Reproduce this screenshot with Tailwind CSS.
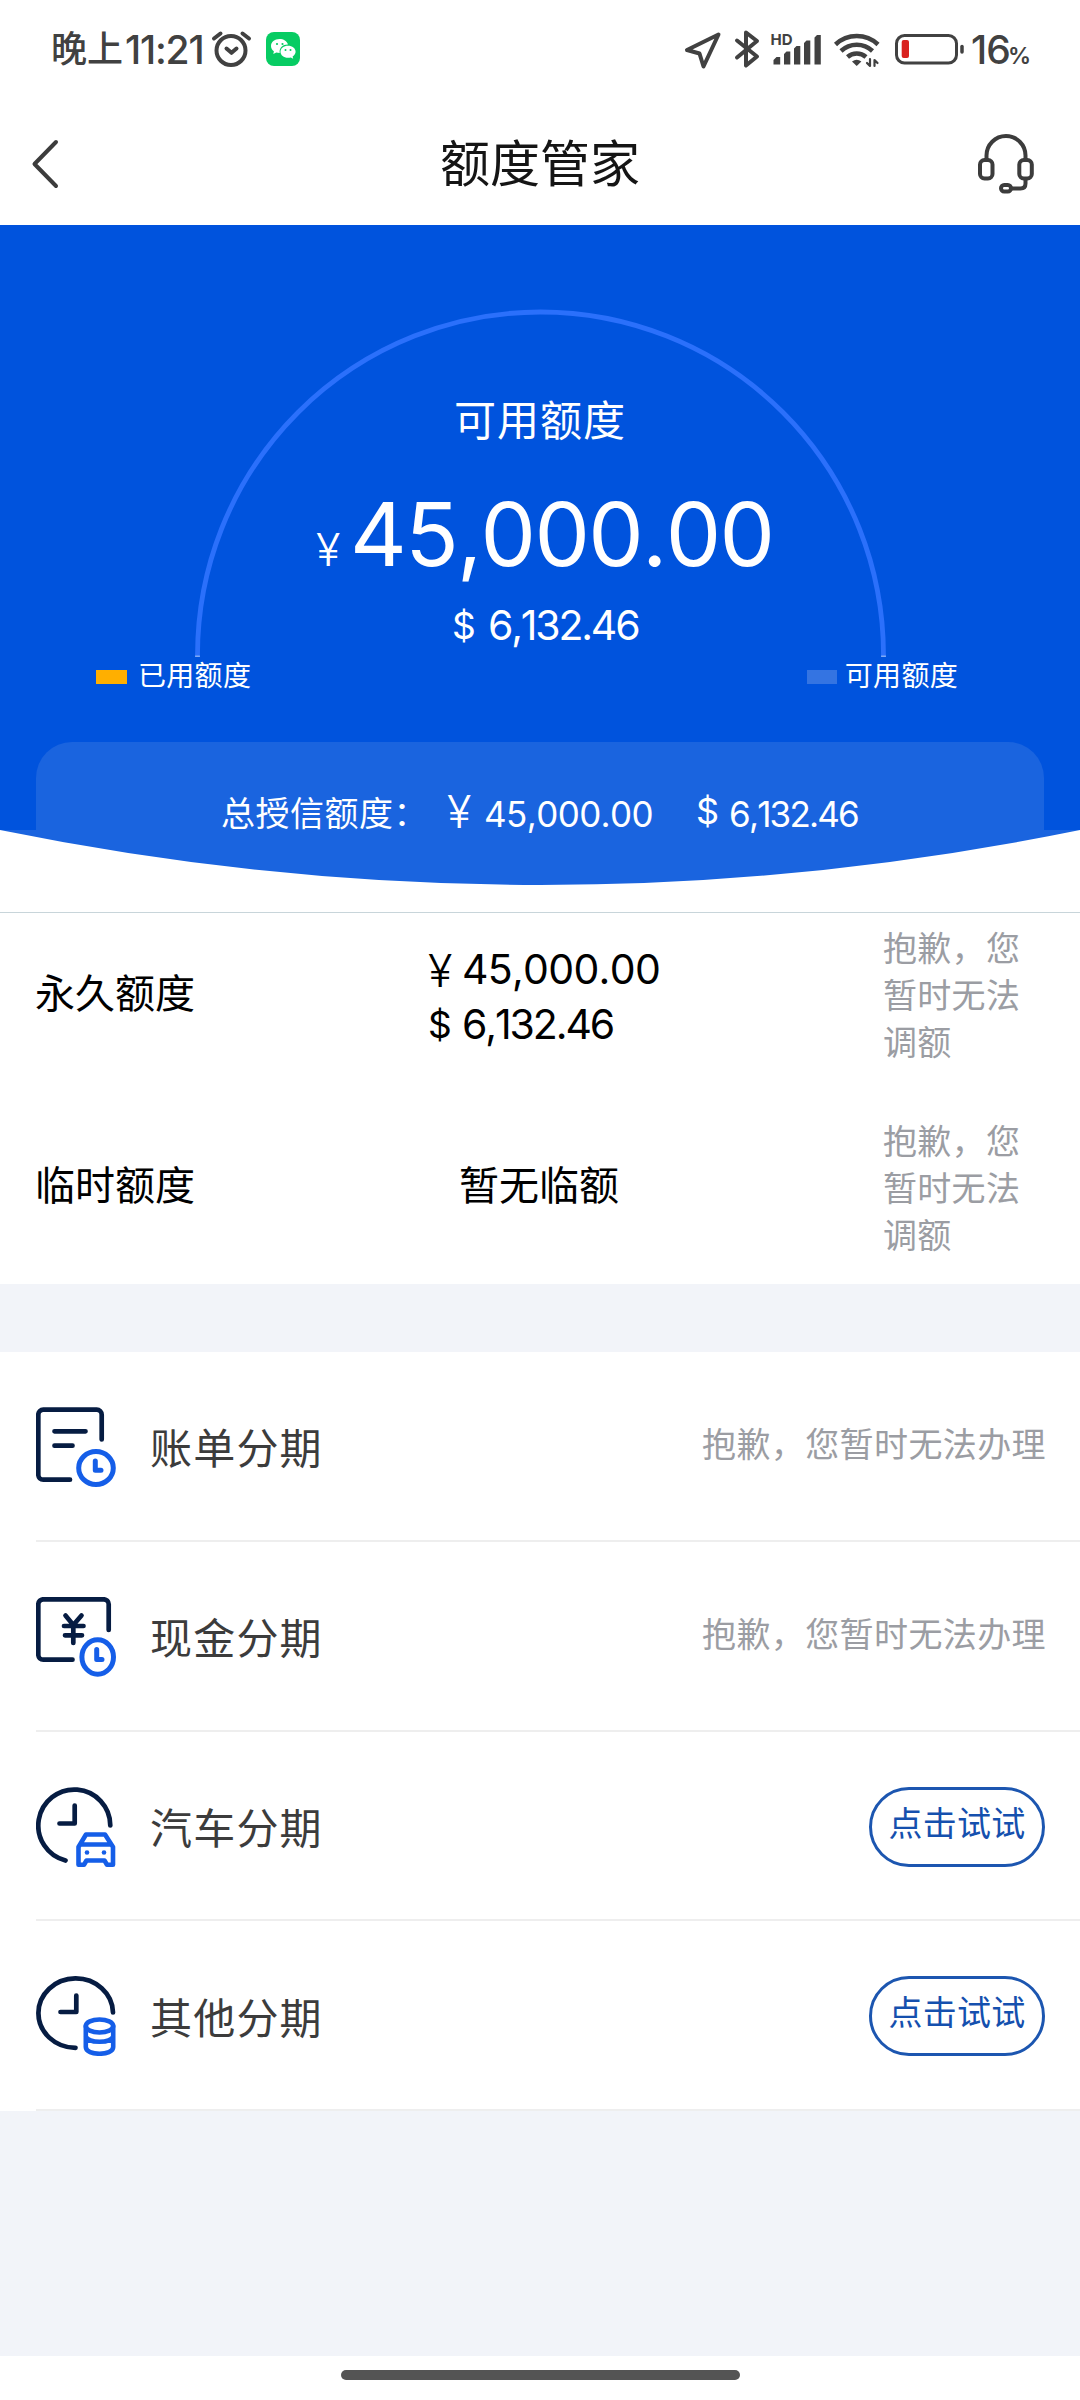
<!DOCTYPE html>
<html lang="zh-CN">
<head>
<meta charset="utf-8">
<title>额度管家</title>
<script src="https://cdn.jsdelivr.net/npm/@tailwindcss/browser@4"></script>
</head>
<body class="bg-white">
<div class="flex h-[2400px] w-[1080px] flex-col overflow-hidden bg-white font-[Inter,'Noto_Sans_CJK_SC',sans-serif] leading-none whitespace-nowrap text-black [font-kerning:none]">

  <!-- status bar -->
  <header class="flex h-[98px] shrink-0 items-center pl-[51px] text-[#414141]">
    <span class="text-[36px] font-medium">晚上</span>
    <span class="ml-[2px] w-[85px] text-[39px] font-medium tracking-[-1.2px]">11:21</span>
    <svg class="shrink-0" width="42" height="42" viewBox="210 28 42 42" fill="none" stroke="currentColor" stroke-width="4" stroke-linecap="round" stroke-linejoin="round">
      <circle cx="231" cy="50.5" r="14.5"/><path d="M214 38.5 220.5 33.5M242.5 33.5 249 38.5M226.5 48.5 231.5 52.8 236.5 48.5"/>
    </svg>
    <svg class="ml-[14px] shrink-0" width="34" height="34" viewBox="0 0 34 34">
      <rect width="34" height="34" rx="8" fill="#07cc63"/>
      <path fill="#fff" d="M13.500 7C8.500 7 5 10 5 14c0 2.300 1.100 4 2.900 5.300L7.300 22l3-1.500 3.400.5C13 15.500 17 12.300 22 12.500 21 9 17.500 7 13.500 7z"/>
      <path fill="#fff" d="M22 13.800c-4.300 0-7.500 2.600-7.500 6s3.200 6 7.500 6c1 0 2-.2 2.800-.4l2.400 1.300-.6-2.300c1.900-1.100 3-2.700 3-4.600 0-3.400-3.300-6-7.600-6z"/>
      <g fill="#07cc63"><circle cx="11" cy="12" r="1.100"/><circle cx="16.500" cy="12" r="1.100"/><circle cx="19.500" cy="18" r="1"/><circle cx="24.500" cy="18" r="1"/></g>
    </svg>
    <svg class="ml-[382px] shrink-0" width="284" height="46" viewBox="682 26 284 46" fill="none" stroke="currentColor" stroke-width="4" stroke-linecap="round" stroke-linejoin="round">
      <path d="M718.500 34.500 687 50 699.500 53.500 703.500 66.500z"/>
      <path d="M737 40.500 757 56.500 746 65.500V32.500L757 41 737 57.500"/>
      <text x="770.500" y="45" class="text-[15px] font-bold" fill="currentColor" stroke="none">HD</text>
      <g fill="currentColor" stroke="none"><path d="M773.500 64.500V60l3-3h3.700v7.500zM784 64.500V54l2.500-2.500h3.800v13zM794 64.500V48.500l2.500-2.500h3.800v18.500zM804 64.500V43l2.500-2.500h3.800v24zM814.500 64.500V37.500l2.500-2.500h3.800v29.500z"/></g>
      <g stroke-width="4.500" stroke-linecap="butt"><path d="M835.500 44.500a31 31 0 0 1 42.500 0M841 51a23 23 0 0 1 31.500 0M847.500 57a14 14 0 0 1 18.500 0"/></g>
      <path fill="currentColor" stroke="none" d="M852 61.500q4.700-3.500 9.400 0L856.700 66z"/>
      <path stroke-width="2.200" d="M870 59v7l-3-3M874.500 66v-6l3 3"/>
      <rect x="896.500" y="35.500" width="60" height="27.500" rx="8" stroke-width="3"/>
      <path stroke-width="3.500" d="M962 46.500v5.500"/>
      <rect x="901.700" y="40" width="7.300" height="18" rx="2" fill="#d9211e" stroke="none"/>
    </svg>
    <div class="ml-[5px] flex items-baseline"><span class="w-[37px] text-[39px] font-medium tracking-[-1px]">16</span><span class="text-[23px] font-semibold">%</span></div>
  </header>

  <!-- title bar -->
  <nav class="flex h-[127px] shrink-0 items-center justify-between pr-[46px] pb-0 pl-[31px]">
    <svg class="mt-[4px]" width="70" height="52" viewBox="0 0 70 52" fill="none" stroke="#3c3c3c" stroke-width="4" stroke-linecap="round" stroke-linejoin="round"><path d="M25 4 3.500 26 25 48"/></svg>
    <h1 class="mt-[4px] ml-[7px] text-[50px] text-[#151515]">额度管家</h1>
    <svg class="mt-[5px] ml-[6px]" width="56" height="60" viewBox="0 0 56 60" fill="none" stroke="#3c3c3c" stroke-width="4" stroke-linecap="round">
      <path d="M8.500 25V21.500a19.500 19.500 0 0 1 39 0V25"/>
      <rect x="2" y="26" width="12.500" height="18.500" rx="4.500"/><rect x="41.300" y="26" width="12.500" height="18.500" rx="4.500"/>
      <path d="M47.500 45v4.500q0 5-5 5H34"/><rect x="23" y="51" width="10" height="6.500" rx="3.200"/>
    </svg>
  </nav>

  <!-- available credit -->
  <section class="relative flex h-[605px] shrink-0 flex-col bg-[#0053dd] text-white">
    <svg class="absolute top-[84px] left-[194px]" width="693" height="348" viewBox="0 0 693 348" fill="none" stroke="#2b70fb" stroke-width="4.800">
      <path d="M3.500 348V346a343 343 0 0 1 686 0V348"/><path stroke="#7fa9f5" d="M3.500 346.500v1.500M689.500 346.500v1.500"/>
    </svg>
    <div class="mt-[171px] flex h-[50px] items-center justify-center text-[42px] tracking-[1px]">可用额度</div>
    <div class="mt-[48px] flex h-[80px] items-center pl-[316px]">
      <div class="flex items-baseline"><span class="w-[34px] text-[45px] font-light">¥</span><span class="text-[88px] tracking-[-1.7px]">45,000.00</span></div>
    </div>
    <div class="mt-[31px] flex h-[40px] items-center pl-[452px] text-[41px]"><span class="w-[36px] text-[37px]">$</span><span class="tracking-[-2.2px]">6,132.46</span></div>
    <div class="mt-[16px] flex h-[30px] items-center justify-between pr-[122px] pl-[96px] text-[28px]">
      <div class="flex items-center tracking-[0.3px]"><i class="mt-[2px] mr-[11px] h-[14px] w-[31px] bg-[#ffaf00]"></i>已用额度</div>
      <div class="flex items-center tracking-[0.3px]"><i class="mt-[2px] mr-[8px] h-[14px] w-[30px] bg-[#3474e2]"></i>可用额度</div>
    </div>
    <div class="mx-[36px] mt-[51px] flex h-[88px] items-center rounded-t-[36px] bg-[#1a64df] pt-[56px] pl-[185px]">
      <span class="w-[226px] text-[34px] tracking-[0.5px]">总授信额度：</span>
      <span class="-mt-[6px] w-[37px] text-[45px] font-light">¥</span>
      <span class="w-[212px] text-[35px] tracking-[-0.600px]">45,000.00</span>
      <span class="-mt-[6px] w-[33px] text-[36px]">$</span>
      <span class="text-[35px] tracking-[-1.800px]">6,132.46</span>
    </div>
  </section>
  <svg class="shrink-0" width="1080" height="82" viewBox="0 0 1080 82"><path fill="#1a64df" d="M0 0Q540 110 1080 0z"/></svg>

  <!-- credit lines -->
  <section class="h-[372px] shrink-0 border-t border-[#c8d5da]">
    <div class="flex h-[165px] items-center pl-[35px]">
      <span class="-mt-[3px] w-[393px] text-[40px]">永久额度</span>
      <div class="mt-[3px] flex w-[455px] flex-col gap-[14px] text-[41px]">
        <div class="flex"><span class="w-[34px] text-[45px] leading-[43px] font-light">¥</span><span class="tracking-[-0.700px]">45,000.00</span></div>
        <div class="-mt-[2px] flex"><span class="w-[34px] text-[37px] leading-[41px]">$</span><span class="tracking-[-2.100px]">6,132.46</span></div>
      </div>
      <p class="w-[150px] text-[34px] leading-[47px] tracking-[0.300px] text-[#9b9da3]">抱歉，您<br>暂时无法<br>调额</p>
    </div>
    <div class="mt-[27px] flex h-[165px] items-center pl-[35px]">
      <span class="-mt-[3px] w-[424px] text-[40px]">临时额度</span>
      <span class="-mt-[3px] w-[424px] text-[40px]">暂无临额</span>
      <p class="mt-[1px] w-[150px] text-[34px] leading-[47px] tracking-[0.300px] text-[#9b9da3]">抱歉，您<br>暂时无法<br>调额</p>
    </div>
  </section>
  <div class="h-[68px] shrink-0 bg-[#f2f4f9]"></div>

  <!-- instalment services -->
  <ul class="shrink-0 text-[42px] text-[#3c3c3c]">
    <li class="ml-[36px] flex h-[190px] items-center border-b-2 border-[#eee] pr-[34px]">
      <svg width="80" height="80" viewBox="0 0 80 80" class="mt-[2px]" fill="none" stroke="#061c42" stroke-width="4.700" stroke-linecap="round" stroke-linejoin="round">
        <path d="M34 72.700H7.300a5 5 0 0 1-5-5V7.700a5 5 0 0 1 5-5H60.700a5 5 0 0 1 5 5V32.500M18.500 24.300H49.500M18.500 38.700H36.500"/>
        <g stroke="#155ee8" stroke-width="5"><ellipse cx="60" cy="61" rx="17.300" ry="16.500"/><path d="M59.300 54v9.300H65"/></g>
      </svg>
      <span class="mt-[6px] ml-[34px] grow tracking-[1.200px]">账单分期</span>
      <span class="-mt-[3px] text-[34px] tracking-[0.400px] text-[#9b9da3]">抱歉，您暂时无法办理</span>
    </li>
    <li class="ml-[36px] flex h-[190px] items-center border-b-2 border-[#eee] pr-[34px]">
      <svg width="80" height="80" viewBox="0 0 80 80" class="mt-[2px]" fill="none" stroke="#061c42" stroke-width="4.700" stroke-linecap="round" stroke-linejoin="round">
        <path d="M36.500 62.700H7.300a5 5 0 0 1-5-5V7.300a5 5 0 0 1 5-5H67.700a5 5 0 0 1 5 5V33"/>
        <path d="M29.500 18.500 37.300 28 45.500 18.500M37.300 28V46M28 29H47.500M29 38.300H46"/>
        <g stroke="#155ee8" stroke-width="5"><ellipse cx="61.700" cy="60" rx="15.800" ry="17.200"/><path d="M60.700 52.500V62.500H66"/></g>
      </svg>
      <span class="mt-[6px] ml-[34px] grow tracking-[1.200px]">现金分期</span>
      <span class="-mt-[3px] text-[34px] tracking-[0.400px] text-[#9b9da3]">抱歉，您暂时无法办理</span>
    </li>
    <li class="ml-[36px] flex h-[189px] items-center border-b-2 border-[#eee] pr-[35px]">
      <svg width="80" height="80" viewBox="0 0 80 80" class="mt-[2px]" fill="none" stroke="#061c42" stroke-width="4.700" stroke-linecap="round" stroke-linejoin="round">
        <path d="M29.500 73.500A36 36 0 1 1 74.300 38.500M38.700 18.500V36.500H23.500"/>
        <g stroke="#155ee8" stroke-width="4.600"><path d="M42.500 60 50 47.500H69L77 60V77.700H71L68.500 73.500H50.500L48 77.700H42.500zM45.500 57.500H73.500"/></g>
        <g fill="#155ee8" stroke="none"><circle cx="51" cy="65.500" r="2.300"/><circle cx="68" cy="65.500" r="2.300"/></g>
      </svg>
      <span class="mt-[6px] ml-[34px] grow tracking-[1.200px]">汽车分期</span>
      <button class="mt-[2px] flex h-[80px] w-[176px] items-center justify-center rounded-full border-[3px] border-[#1c56b0] pb-[6px] text-[34px] tracking-[0.300px] text-[#1550ae]">点击试试</button>
    </li>
    <li class="ml-[36px] flex h-[190px] items-center border-b-2 border-[#eee] pr-[35px]">
      <svg width="80" height="80" viewBox="0 0 80 80" class="mt-[2px]" fill="none" stroke="#061c42" stroke-width="4.700" stroke-linecap="round" stroke-linejoin="round">
        <path d="M39.500 71.800A37.300 34.700 0 1 1 77 36.500M40.300 19.500V36H24.500"/>
        <g stroke="#155ee8" stroke-width="4.600"><ellipse cx="63.500" cy="50" rx="13.700" ry="6.500"/><path d="M49.800 50V71c0 9 27.400 9 27.400 0V50M49.800 60.500c2 7 25.400 7 27.400 0"/></g>
      </svg>
      <span class="mt-[7px] ml-[34px] grow tracking-[1.200px]">其他分期</span>
      <button class="mt-[2px] flex h-[80px] w-[176px] items-center justify-center rounded-full border-[3px] border-[#1c56b0] pb-[6px] text-[34px] tracking-[0.300px] text-[#1550ae]">点击试试</button>
    </li>
  </ul>
  <div class="h-[245px] shrink-0 bg-[#f2f4f9]"></div>

  <!-- gesture bar -->
  <footer class="flex h-[44px] shrink-0 justify-center pt-[14px]"><div class="h-[10px] w-[399px] rounded-full bg-[#545454]"></div></footer>
</div>
</body>
</html>
